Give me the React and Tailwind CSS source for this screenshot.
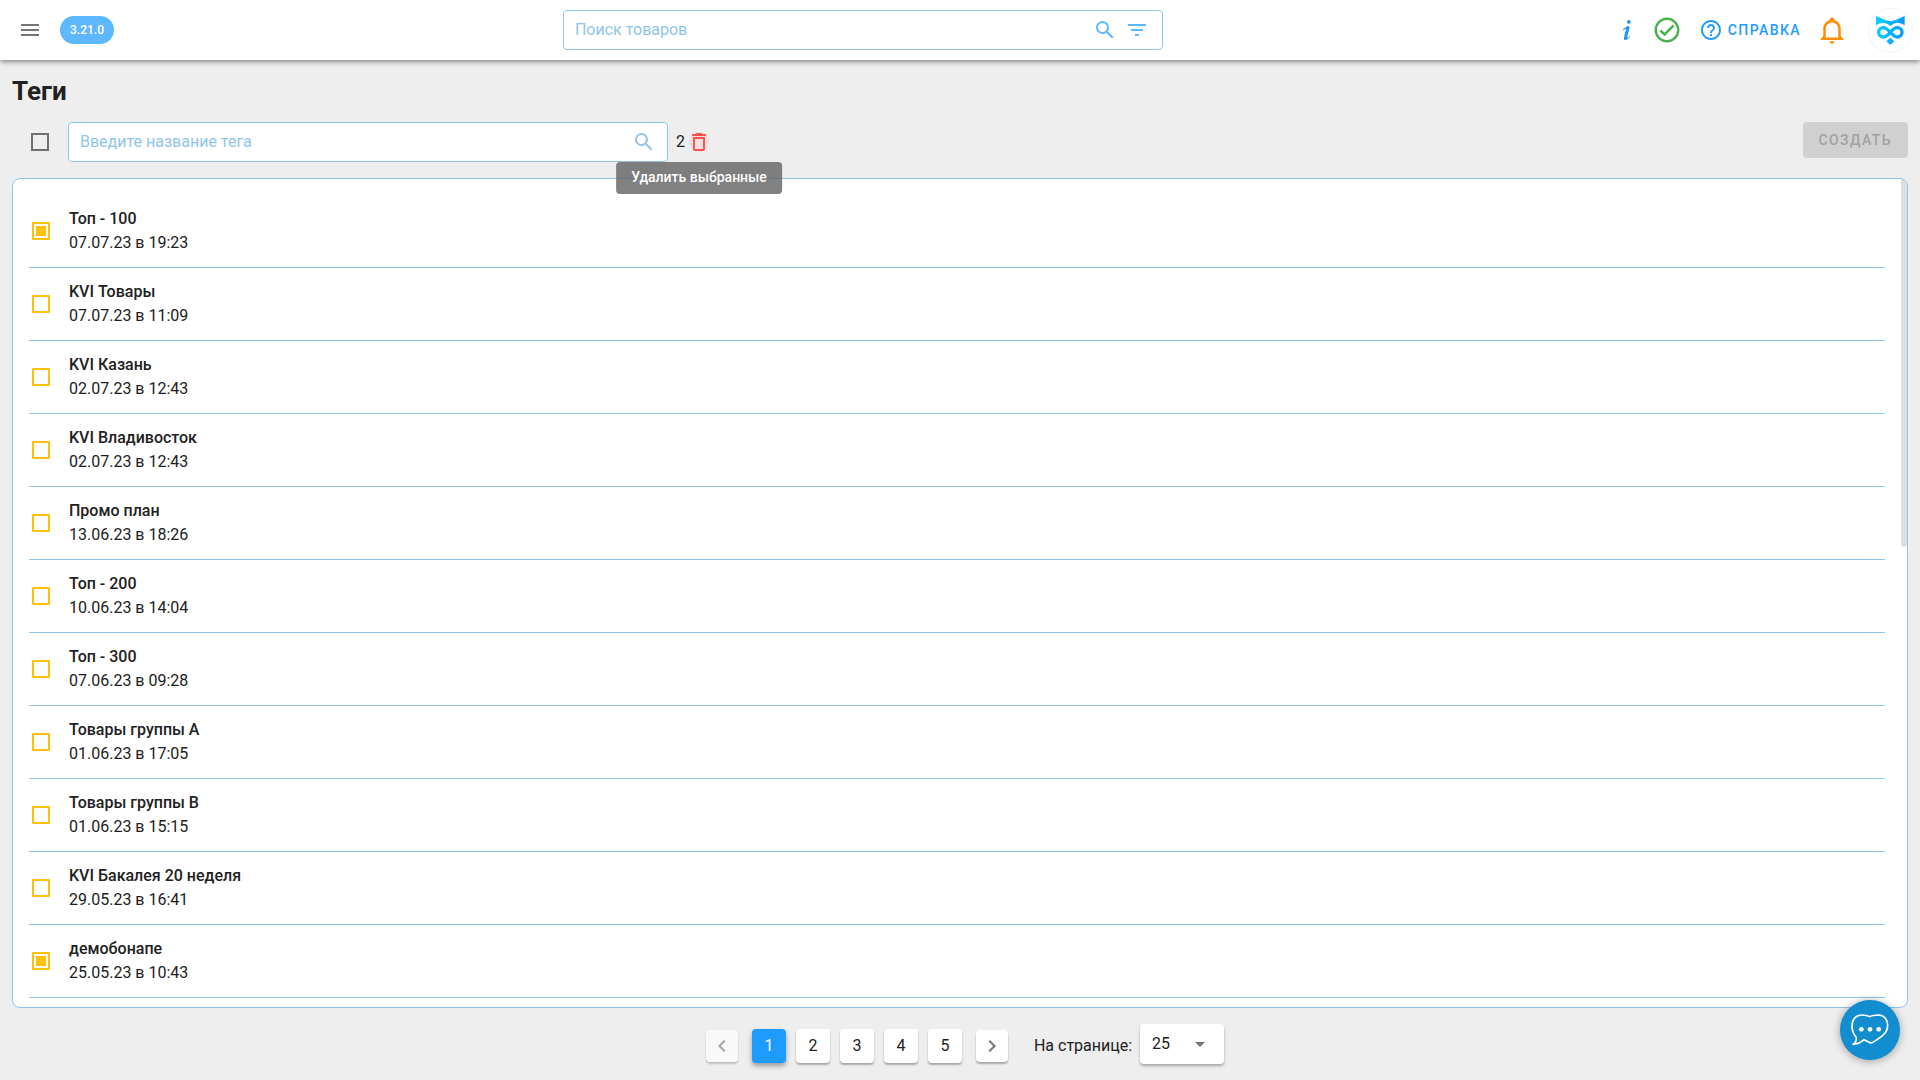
import { useState } from "react";
import {
  MdArrowDropDown,
  MdChevronLeft,
  MdChevronRight,
  MdFilterList,
  MdHelpOutline,
  MdMenu,
} from "react-icons/md";

const ICONS = {
  magnify:
    "M9.5,3A6.5,6.5 0 0,1 16,9.5C16,11.11 15.41,12.59 14.44,13.73L14.71,14H15.5L20.5,19L19,20.5L14,15.5V14.71L13.73,14.44C12.59,15.41 11.11,16 9.5,16A6.5,6.5 0 0,1 3,9.5A6.5,6.5 0 0,1 9.5,3M9.5,5C7,5 5,7 5,9.5C5,12 7,14 9.5,14C12,14 14,12 14,9.5C14,7 12,5 9.5,5Z",
  info: "M13.5,4A1.5,1.5 0 0,0 12,5.5A1.5,1.5 0 0,0 13.5,7A1.5,1.5 0 0,0 15,5.5A1.5,1.5 0 0,0 13.5,4M13.14,8.77C11.95,8.87 8.7,11.46 8.7,11.46C8.5,11.61 8.56,11.6 8.72,11.88C8.88,12.15 8.86,12.17 9.05,12.04C9.25,11.91 9.58,11.7 10.13,11.36C12.25,10 10.47,13.14 9.56,18.43C9.2,21.05 11.56,19.7 12.17,19.3C12.77,18.91 14.38,17.8 14.54,17.69C14.76,17.54 14.6,17.42 14.43,17.17C14.31,17 14.19,17.12 14.19,17.12C13.54,17.55 12.35,18.45 12.19,17.88C12,17.31 13.22,13.4 13.89,10.71C14,10.07 14.3,8.67 13.14,8.77Z",
  check:
    "M12 2C6.5 2 2 6.5 2 12S6.5 22 12 22 22 17.5 22 12 17.5 2 12 2M12 20C7.59 20 4 16.41 4 12S7.59 4 12 4 20 7.59 20 12 16.41 20 12 20M16.59 7.58L10 14.17L7.41 11.59L6 13L10 17L18 9L16.59 7.58Z",
  bell: "M10 21H14C14 22.1 13.1 23 12 23S10 22.1 10 21M21 19V20H3V19L5 17V11C5 7.9 7.03 5.17 10 4.29C10 4.19 10 4.1 10 4C10 2.9 10.9 2 12 2S14 2.9 14 4C14 4.1 14 4.19 14 4.29C16.97 5.17 19 7.9 19 11V17L21 19M17 11C17 8.24 14.76 6 12 6S7 8.24 7 11V18H17V11Z",
  trash:
    "M6,19A2,2 0 0,0 8,21H16A2,2 0 0,0 18,19V7H6V19M8,9H16V19H8V9M15.5,4L14.5,3H9.5L8.5,4H5V6H19V4H15.5Z",
};

const initialTags = [
  { id: 1, name: "Топ - 100", date: "07.07.23 в 19:23", selected: true },
  { id: 2, name: "KVI Товары", date: "07.07.23 в 11:09", selected: false },
  { id: 3, name: "KVI Казань", date: "02.07.23 в 12:43", selected: false },
  { id: 4, name: "KVI Владивосток", date: "02.07.23 в 12:43", selected: false },
  { id: 5, name: "Промо план", date: "13.06.23 в 18:26", selected: false },
  { id: 6, name: "Топ - 200", date: "10.06.23 в 14:04", selected: false },
  { id: 7, name: "Топ - 300", date: "07.06.23 в 09:28", selected: false },
  { id: 8, name: "Товары группы А", date: "01.06.23 в 17:05", selected: false },
  { id: 9, name: "Товары группы В", date: "01.06.23 в 15:15", selected: false },
  { id: 10, name: "KVI Бакалея 20 неделя", date: "29.05.23 в 16:41", selected: false },
  { id: 11, name: "демобонапе", date: "25.05.23 в 10:43", selected: true },
];

const Icon = ({ name, className }) => (
  <svg viewBox="0 0 24 24" fill="currentColor" className={className} aria-hidden="true">
    <path d={ICONS[name]} />
  </svg>
);

const OwlLogo = () => (
  <svg viewBox="0 0 135 135" className="size-[45px]" aria-hidden="true">
    <defs>
      <linearGradient id="owl" x1="24" y1="0" x2="110" y2="0" gradientUnits="userSpaceOnUse">
        <stop offset="0" stopColor="#00d2ff" />
        <stop offset="1" stopColor="#0a96ff" />
      </linearGradient>
    </defs>
    <circle cx="67" cy="67" r="66" fill="none" stroke="#d6e9fb" strokeWidth="2" strokeDasharray="8 4" />
    <path
      d="M24 24L53 37Q67 42 81 37L110 24V52Q100 44 88 44Q76 45 67 54Q58 45 46 44Q34 44 24 52Z"
      fill="url(#owl)"
    />
    <path
      d="M67 73C60 82 55 87 46 87A14 14 0 0 1 46 59C61 59 73 87 88 87A14 14 0 0 0 88 59C79 59 74 64 67 73"
      fill="none"
      stroke="url(#owl)"
      strokeWidth="10"
    />
    <path d="M67 89L79 100L67 111L55 100Z" fill="url(#owl)" />
  </svg>
);

const Header = () => (
  <header className="relative z-10 flex h-[60px] shrink-0 items-center bg-white pl-3 pr-[7px] shadow-[0_2px_4px_-1px_rgba(0,0,0,0.4),0_4px_5px_0_rgba(0,0,0,0.12)]">
    <button type="button" aria-label="Меню" className="flex size-9 items-center justify-center text-[#757575]">
      <MdMenu className="size-6" />
    </button>
    <span className="ml-3 flex h-7 items-center rounded-full bg-[#5eb8ff] px-[10px] text-xs font-medium text-white">
      3.21.0
    </span>

    <div className="mx-auto flex h-10 w-[600px] items-center gap-2 rounded border border-[#90c5ea] bg-white pl-[11px] pr-[13px] text-[#5eb8ff]">
      <input
        type="text"
        aria-label="Поиск товаров"
        placeholder="Поиск товаров"
        className="min-w-0 flex-1 text-base text-gray-900 outline-none placeholder:text-[#90c5ea]"
      />
      <button type="button" aria-label="Найти">
        <Icon name="magnify" className="size-6" />
      </button>
      <button type="button" aria-label="Фильтр">
        <MdFilterList className="size-6" />
      </button>
    </div>

    <div className="flex items-center">
      <button type="button" aria-label="Информация" className="text-[#2196f3]">
        <Icon name="info" className="size-[30px]" />
      </button>
      <button type="button" aria-label="Статус" className="ml-[10px] text-[#4caf50]">
        <Icon name="check" className="size-[30px]" />
      </button>
      <a
        href="#help"
        className="ml-[17px] flex items-center gap-[5px] text-sm font-medium tracking-widest text-[#1e9bff]"
      >
        <MdHelpOutline className="size-6" />
        СПРАВКА
      </a>
      <button type="button" aria-label="Уведомления" className="ml-4 text-[#ff8f00]">
        <Icon name="bell" className="size-[30px]" />
      </button>
      <a href="#profile" aria-label="Профиль" className="ml-[21px]">
        <OwlLogo />
      </a>
    </div>
  </header>
);

const TagRow = ({ tag, onToggle }) => (
  <li className="flex items-center border-b border-[#90c5ea] py-3 pl-[3px]">
    <input
      type="checkbox"
      id={`tag-${tag.id}`}
      checked={tag.selected}
      onChange={() => onToggle(tag.id)}
      className="size-[18px] appearance-none rounded-[1px] border-2 border-[#ffc107] bg-clip-content p-[2px] checked:bg-[#ffc107]"
    />
    <label htmlFor={`tag-${tag.id}`} className="ml-[19px] text-base">
      <span className="block font-medium">{tag.name}</span>
      <span className="block">{tag.date}</span>
    </label>
  </li>
);

const Pagination = ({ page, setPage }) => (
  <nav className="flex h-[72px] shrink-0 items-center justify-center pl-[10px]">
    <div className="flex items-center pt-1">
      <button
        type="button"
        disabled
        aria-label="Назад"
        className="flex size-8 items-center justify-center rounded bg-white/60 text-[#a5a5a5] shadow-[0_2px_2px_rgba(0,0,0,0.2)]"
      >
        <MdChevronLeft className="size-6" />
      </button>
      <div className="mx-[14px] flex gap-[10px]">
        {[1, 2, 3, 4, 5].map((n) => (
          <button
            key={n}
            type="button"
            onClick={() => setPage(n)}
            className={`h-[34px] w-[34px] rounded text-base ${
              n === page
                ? "bg-[#1e9bff] text-white shadow-[0_3px_5px_rgba(0,0,0,0.35)]"
                : "bg-white shadow-[0_2px_2px_rgba(0,0,0,0.3)]"
            }`}
          >
            {n}
          </button>
        ))}
      </div>
      <button
        type="button"
        aria-label="Вперёд"
        className="flex size-8 items-center justify-center rounded bg-white text-[#757575] shadow-[0_2px_2px_rgba(0,0,0,0.3)]"
      >
        <MdChevronRight className="size-6" />
      </button>

      <label htmlFor="per-page" className="ml-[26px] text-base">
        На странице:
      </label>
    </div>
    <div className="relative ml-2">
      <select
        id="per-page"
        defaultValue="25"
        className="h-10 w-[84px] appearance-none rounded bg-white pl-3 text-base shadow-[0_2px_3px_rgba(0,0,0,0.3)]"
      >
        <option value="25">25</option>
      </select>
      <MdArrowDropDown className="pointer-events-none absolute right-3 top-2 size-6 text-[#757575]" />
    </div>
  </nav>
);

const ChatButton = () => (
  <button
    type="button"
    aria-label="Чат"
    className="fixed bottom-5 right-5 z-20 flex size-[60px] items-center justify-center rounded-full bg-[#118dd0] shadow-[0_1px_8px_rgba(0,0,0,0.35)]"
  >
    <svg viewBox="0 0 120 120" className="size-10" fill="none" aria-hidden="true">
      <path
        d="M60 20C68 15 78 15 86 15C103 16 113 30 113 46C113 61 106 71 95 79L72 95Q63 102 56 96L42 89C32 98 22 103 9 103C18 97 21 90 18 81C10 72 6 63 6 49C6 28 18 15 36 15C44 15 52 16 60 20Z"
        stroke="white"
        strokeWidth="5"
        strokeLinejoin="round"
      />
      <circle cx="34" cy="58" r="7" fill="white" />
      <circle cx="60" cy="58" r="7" fill="white" />
      <circle cx="86" cy="58" r="7" fill="white" />
    </svg>
  </button>
);

const App = () => {
  const [tags, setTags] = useState(initialTags);
  const [page, setPage] = useState(1);

  const selectedCount = tags.filter((t) => t.selected).length;
  const allSelected = selectedCount === tags.length;

  const toggleTag = (id) => {
    setTags(tags.map((t) => (t.id === id ? { ...t, selected: !t.selected } : t)));
  };

  const toggleAll = () => {
    setTags(tags.map((t) => ({ ...t, selected: !allSelected })));
  };

  return (
    <div className="flex h-screen flex-col bg-[#eeeeee] font-['Roboto',sans-serif] text-[#212121]">
      <Header />

      <main className="flex min-h-0 flex-1 flex-col px-3">
        <h1 className="pt-[15px] text-[26px] font-bold leading-8">Теги</h1>

        <div className="mb-4 mt-[15px] flex h-10 items-center">
          <input
            type="checkbox"
            aria-label="Выбрать все"
            checked={allSelected}
            onChange={toggleAll}
            className="ml-[19px] size-[18px] appearance-none border-2 border-[#6f6f6f] bg-clip-content p-[2px] checked:bg-[#6f6f6f]"
          />
          <div className="ml-[19px] flex h-10 w-[600px] items-center rounded border border-[#90c5ea] bg-white pl-[11px] pr-[11px] text-[#90c5ea]">
            <input
              type="text"
              aria-label="Введите название тега"
              placeholder="Введите название тега"
              className="min-w-0 flex-1 text-base text-gray-900 outline-none placeholder:text-[#90c5ea]"
            />
            <button type="button" aria-label="Найти тег">
              <Icon name="magnify" className="size-6" />
            </button>
          </div>
          <span className="ml-2 text-base">{selectedCount}</span>
          <div className="relative ml-[2px] flex">
            <button
              type="button"
              aria-describedby="delete-tip"
              aria-label="Удалить выбранные"
              className="rounded-full bg-[radial-gradient(circle,#f2e0df_10px,transparent_10px)] text-[#ff5252]"
            >
              <Icon name="trash" className="size-6" />
            </button>
            <div
              id="delete-tip"
              role="tooltip"
              className="absolute left-1/2 top-8 z-10 -translate-x-1/2 whitespace-nowrap rounded bg-[#616161]/80 px-[15px] pb-[7px] pt-[5px] text-sm font-medium text-white"
            >
              Удалить выбранные
            </div>
          </div>
          <button
            type="button"
            disabled
            className="mb-1 ml-auto h-9 rounded bg-[#d0d0d0] px-4 text-sm font-medium tracking-widest text-[#a2a2a2]"
          >
            СОЗДАТЬ
          </button>
        </div>

        <section className="relative min-h-0 flex-1 overflow-hidden rounded-lg border border-[#90c5ea] bg-white">
          <ul className="py-4 pl-4 pr-[22px]">
            {tags.map((tag) => (
              <TagRow key={tag.id} tag={tag} onToggle={toggleTag} />
            ))}
          </ul>
          <div className="absolute right-0 top-0 h-4/9 w-[6px] rounded-b bg-[#dedede]" />
        </section>
      </main>

      <Pagination page={page} setPage={setPage} />
      <ChatButton />
    </div>
  );
};

export default App;
